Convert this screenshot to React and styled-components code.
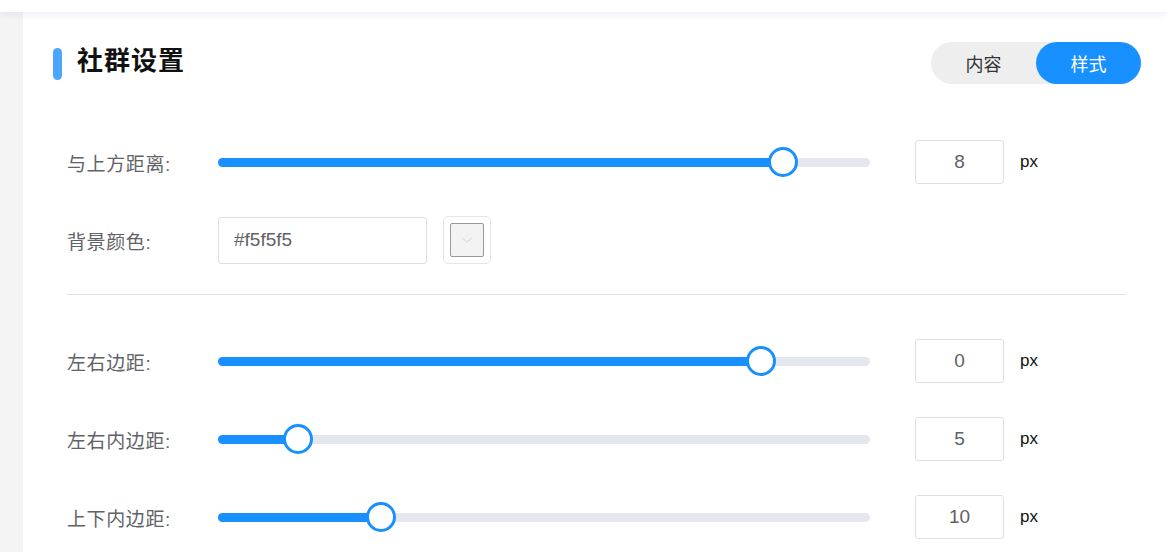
import styled, { createGlobalStyle } from 'styled-components';

const GlobalStyle = createGlobalStyle`
  html, body {
    margin: 0;
    padding: 0;
    background: #ffffff;
    font-family: "Liberation Sans", "Noto Sans CJK SC", sans-serif;
  }
  * {
    box-sizing: border-box;
  }
`;

const rows = [
  { label: '与上方距离:', value: 8, percent: 86.7 },
  { label: '左右边距:', value: 0, percent: 83.3 },
  { label: '左右内边距:', value: 5, percent: 12.3 },
  { label: '上下内边距:', value: 10, percent: 25 },
];

function SliderRow({ label, value, percent }) {
  return (
    <Row>
      <Label>{label}</Label>
      <Track>
        <Fill style={{ width: `${percent}%` }} />
        <Thumb style={{ left: `${percent}%` }} />
      </Track>
      <NumberBox>{value}</NumberBox>
      <Unit>px</Unit>
    </Row>
  );
}

function App() {
  return (
    <Page>
      <GlobalStyle />
      <TopBar />
      <Body>
        <SideStrip />
        <Panel>
          <Header>
            <TitleWrap>
              <TitleMark />
              <Title>社群设置</Title>
            </TitleWrap>
            <Toggle>
              <ToggleItem>内容</ToggleItem>
              <ToggleItem $active>样式</ToggleItem>
            </Toggle>
          </Header>

          <Form>
            <SliderRow {...rows[0]} />
            <Row>
              <Label>背景颜色:</Label>
              <ColorInput>#f5f5f5</ColorInput>
              <ColorPicker>
                <Swatch>
                  <svg width="14" height="10" viewBox="0 0 14 10">
                    <path d="M2 3l5 4 5-4" fill="none" stroke="#dcdcdc" strokeWidth="1.2" />
                  </svg>
                </Swatch>
              </ColorPicker>
            </Row>
            <Divider />
            <SliderRow {...rows[1]} />
            <SliderRow {...rows[2]} />
            <SliderRow {...rows[3]} />
          </Form>
        </Panel>
      </Body>
    </Page>
  );
}

export default App;

const Page = styled.div`
  width: 1167px;
  height: 552px;
  overflow: hidden;
  background: #ffffff;
`;

const TopBar = styled.div`
  height: 12px;
  background: #ffffff;
  box-shadow: 0 3px 6px rgba(110, 130, 220, 0.12);
  position: relative;
  z-index: 1;
`;

const Body = styled.div`
  display: flex;
  height: 540px;
`;

const SideStrip = styled.div`
  width: 23px;
  flex-shrink: 0;
  background: #f4f4f4;
`;

const Panel = styled.div`
  flex: 1;
  background: #ffffff;
  padding: 30px 26px 0 30px;
`;

const Header = styled.div`
  display: flex;
  align-items: center;
  justify-content: space-between;
  height: 42px;
`;

const TitleWrap = styled.div`
  display: flex;
  align-items: center;
  gap: 15px;
  margin-top: 1px;
`;

const TitleMark = styled.span`
  width: 9px;
  height: 32px;
  border-radius: 5px;
  background: #4ca6ff;
`;

const Title = styled.h2`
  margin: 0 0 5px;
  font-size: 26px;
  font-weight: 700;
  color: #111111;
  letter-spacing: 1px;
  line-height: 1;
`;

const Toggle = styled.div`
  display: flex;
  width: 210px;
  height: 42px;
  border-radius: 21px;
  background: #eeeeee;
`;

const ToggleItem = styled.div`
  flex: 1;
  display: flex;
  align-items: center;
  justify-content: center;
  border-radius: 21px;
  font-size: 18px;
  color: ${(p) => (p.$active ? '#ffffff' : '#333333')};
  background: ${(p) => (p.$active ? '#1890ff' : 'transparent')};
`;

const Form = styled.div`
  margin-top: 39px;
  padding: 0 15px 0 14px;
`;

const Row = styled.div`
  display: flex;
  align-items: center;
  height: 78px;
`;

const Label = styled.div`
  width: 151px;
  flex-shrink: 0;
  font-size: 19px;
  letter-spacing: 0.6px;
  color: #5f6368;
`;

const Track = styled.div`
  position: relative;
  width: 652px;
  height: 9px;
  border-radius: 5px;
  background: #e4e7ed;
`;

const Fill = styled.div`
  height: 100%;
  border-radius: 5px;
  background: #1890ff;
`;

const Thumb = styled.div`
  position: absolute;
  top: 50%;
  width: 30px;
  height: 30px;
  border-radius: 50%;
  background: #ffffff;
  border: 3px solid #1890ff;
  transform: translate(-50%, -50%);
`;

const NumberBox = styled.div`
  margin-left: 45px;
  width: 89px;
  height: 44px;
  display: flex;
  align-items: center;
  justify-content: center;
  border: 1px solid #dcdfe6;
  border-radius: 3px;
  font-size: 19px;
  color: #606266;
`;

const Unit = styled.span`
  margin-left: 16px;
  font-size: 17px;
  color: #111111;
`;

const ColorInput = styled.div`
  width: 209px;
  height: 47px;
  display: flex;
  align-items: center;
  padding-left: 15px;
  border: 1px solid #dcdfe6;
  border-radius: 3px;
  font-size: 19px;
  color: #606266;
`;

const ColorPicker = styled.div`
  margin-left: 16px;
  width: 48px;
  height: 48px;
  display: flex;
  align-items: center;
  justify-content: center;
  border: 1px solid #e6e6e6;
  border-radius: 5px;
`;

const Swatch = styled.div`
  width: 34px;
  height: 34px;
  display: flex;
  align-items: center;
  justify-content: center;
  background: #f3f3f3;
  border: 1px solid #999999;
  border-radius: 2px;
`;

const Divider = styled.div`
  height: 1px;
  background: #e0e0e6;
  margin: 15px 0 27px;
`;
